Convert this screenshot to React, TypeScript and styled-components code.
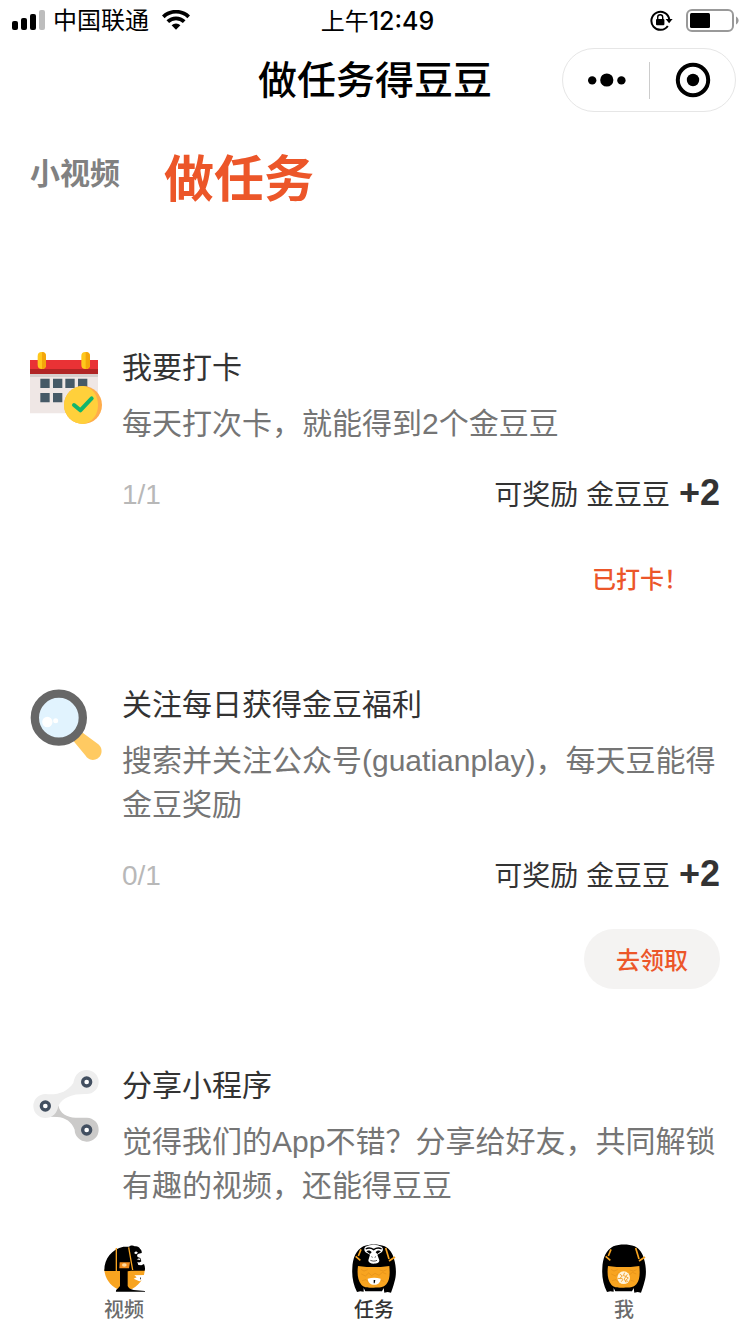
import React from "react";
import styled, { createGlobalStyle } from "styled-components";

const GlobalStyle = createGlobalStyle`
  * { box-sizing: border-box; }
  body {
    margin: 0;
    background: #fff;
    color: #333;
    font-family: "Liberation Sans", "Noto Sans CJK SC", sans-serif;
  }
  button { font-family: inherit; border: 0; padding: 0; background: none; cursor: pointer; }
  a { color: inherit; text-decoration: none; }
  h1, h2, p { margin: 0; font-weight: 400; }
  svg { display: block; flex: none; }
`;

const Screen = styled.div`
  display: flex;
  flex-direction: column;
  height: 100vh;
`;

const StatusBar = styled.div`
  display: grid;
  grid-template-columns: 1fr auto 1fr;
  align-items: center;
  height: 40px;
  padding: 0 11px 0 12px;
  color: #000;
  font-family: Inter, "Noto Sans CJK SC", sans-serif;
  font-size: 24px;
  line-height: 36px;
`;

const StatusGroup = styled.div<{ $end?: boolean }>`
  display: flex;
  align-items: center;
  justify-content: ${(p) => (p.$end ? "flex-end" : "flex-start")};
  gap: ${(p) => (p.$end ? 13 : 8)}px;
`;

const Carrier = styled.span`
  margin-right: 5px;
  padding-top: 2px;
`;

const Clock = styled.time`
  padding: 2px 0 0 4px;
  font-size: 25px;
  font-weight: 500;
`;

const ClockPeriod = styled.span`
  font-size: 24px;
  font-weight: 400;
`;

const NavBar = styled.header`
  display: grid;
  grid-template-columns: 1fr auto 1fr;
  align-items: center;
  height: 80px;
  padding: 0 14px;
  color: #000;
`;

const NavTitle = styled.h1`
  grid-column: 2;
  padding-top: 2px;
  font-size: 39px;
  font-weight: 500;
  line-height: 56px;
`;

const Capsule = styled.div`
  justify-self: end;
  display: flex;
  align-items: center;
  width: 174px;
  height: 64px;
  border: 1px solid #e6e6e6;
  border-radius: 32px;
`;

const CapsuleButton = styled.button`
  display: flex;
  flex: 1;
  align-items: center;
  justify-content: center;
  height: 100%;
  padding: 0 0 0 2px;
`;

const CapsuleDivider = styled.span`
  width: 1px;
  height: 37px;
  background: #ccc;
`;

const Content = styled.main`
  flex: 1;
  min-height: 0;
  overflow-y: auto;
  scrollbar-width: none;
`;

const Channels = styled.nav`
  display: flex;
  gap: 44px;
  padding: 24px 30px 0;
`;

const ChannelLink = styled.a<{ $active?: boolean }>`
  padding-top: ${(p) => (p.$active ? 0 : 8)}px;
  color: ${(p) => (p.$active ? "#ec5629" : "#818181")};
  font-size: ${(p) => (p.$active ? 50 : 30)}px;
  font-weight: 700;
  line-height: ${(p) => (p.$active ? 72 : 44)}px;
`;

const TaskList = styled.section`
  display: flex;
  flex-direction: column;
  gap: 75px;
  padding: 130px 30px 48px;
`;

const Task = styled.article`
  display: flex;
  gap: 20px;
`;

const TaskIcon = styled.div`
  padding-top: 6px;
`;

const TaskBody = styled.div`
  display: flex;
  flex: 1;
  flex-direction: column;
  min-width: 0;
`;

const TaskTitle = styled.h2`
  font-size: 30px;
  line-height: 44px;
`;

const TaskText = styled.p`
  margin-top: 12px;
  margin-right: -4px;
  color: #757575;
  font-size: 30px;
  line-height: 44px;
`;

const TaskMeta = styled.div`
  display: flex;
  align-items: center;
  justify-content: space-between;
  height: 44px;
  margin-top: 26px;
  font-size: 28px;
  line-height: 44px;
`;

const Progress = styled.span`
  padding-top: 2px;
  color: #b8b8b8;
`;

const Reward = styled.span`
  display: flex;
  align-items: baseline;
  gap: 9px;
`;

const Points = styled.strong`
  font-size: 36px;
`;

const TaskAction = styled.button<{ $done?: boolean }>`
  align-self: flex-end;
  height: 60px;
  margin-top: 32px;
  padding: 3px 32px 0;
  border-radius: 30px;
  background: ${(p) => (p.$done ? "transparent" : "#f4f3f2")};
  color: #ec5629;
  font-size: 24px;
  font-weight: 500;
  line-height: 57px;
`;

const TabBar = styled.nav`
  display: grid;
  grid-template-columns: repeat(3, 1fr);
  height: 98px;
  background: #fff;
`;

const Tab = styled.a<{ $active?: boolean }>`
  display: flex;
  flex-direction: column;
  align-items: center;
  gap: 2px;
  padding: 7px 2px 0 0;
  && { color: ${(p) => (p.$active ? "#333" : "#6b6b6b")}; }
  font-size: 20px;
  font-weight: 500;
  line-height: 28px;
`;

const SignalIcon = () => (
  <svg width="33" height="20" viewBox="0 0 33 20" aria-hidden="true">
    <rect x="0" y="11" width="6" height="9" rx="2" />
    <rect x="9" y="8" width="6" height="12" rx="2" />
    <rect x="18" y="4" width="6" height="16" rx="2" />
    <rect x="27" y="0" width="6" height="20" rx="2" fill="#bdbdbd" />
  </svg>
);

const WifiIcon = () => (
  <svg width="28" height="20" viewBox="0 0 28 20" aria-hidden="true">
    <g fill="none" stroke="#000" strokeWidth="3.800">
      <path d="M1.300 6.800a18.400 18.400 0 0 1 25.400 0" />
      <path d="M5.800 11.700a11.900 11.900 0 0 1 16.400 0" />
    </g>
    <path d="M9.600 15.200a6.300 6.300 0 0 1 8.800 0L14 19.800z" />
  </svg>
);

const RotationLockIcon = () => (
  <svg width="23" height="21" viewBox="0 0 23 21" aria-hidden="true">
    <path d="M17.800 16a9 9 0 1 1 1.500-6.500" fill="none" stroke="#000" strokeWidth="2" />
    <path d="M15.600 9h7l-3.500 4.200z" />
    <rect x="6" y="9" width="8.400" height="6.200" rx="1" />
    <path d="M7.700 9.400V7.200a2.500 2.500 0 0 1 5 0v2.200" fill="none" stroke="#000" strokeWidth="1.400" />
  </svg>
);

const BatteryIcon = () => (
  <svg width="53" height="23" viewBox="0 0 53 23" aria-hidden="true">
    <rect x="1" y="1" width="46" height="21" rx="5" fill="none" stroke="#999" strokeWidth="2" />
    <rect x="4" y="4" width="20" height="15" rx="1.500" />
    <path d="M50 7.500c3.400 1.500 3.400 6.500 0 8z" fill="#999" />
  </svg>
);

const MoreIcon = () => (
  <svg width="38" height="14" viewBox="0 0 38 14" aria-hidden="true">
    <circle cx="4.200" cy="7.400" r="4.200" />
    <circle cx="18.800" cy="7" r="6.600" />
    <circle cx="33.400" cy="7.400" r="4.200" />
  </svg>
);

const TargetIcon = () => (
  <svg width="36" height="36" viewBox="0 0 36 36" aria-hidden="true">
    <circle cx="18" cy="18" r="15.200" fill="none" stroke="#000" strokeWidth="4" />
    <circle cx="18" cy="18" r="6.200" />
  </svg>
);

const CalendarIcon = () => (
  <svg width="72" height="72" viewBox="60 66 216 216" aria-hidden="true">
    <path fill="#efe7e5" d="M60 130h204v120H60z" />
    <path fill="#d6cfcd" d="M60 130h204v11H60z" />
    <path fill="#e93235" d="M60 90h204v28H60z" />
    <path fill="#b12525" d="M60 117h204v15H60z" />
    <rect x="83" y="66" width="25" height="51" rx="12" fill="#ffc81c" />
    <path fill="#f4a60b" d="M96 66c7 0 12 5 12 12v27c0 7-5 12-12 12z" />
    <rect x="214" y="66" width="26" height="51" rx="12" fill="#ffc81c" />
    <path fill="#f4a60b" d="M227 66c8 0 13 5 13 12v27c0 7-5 12-13 12z" />
    <path
      fill="#465a67"
      d="M91 146h28v28H91zM129 146h28v28h-28zM166 146h28v28h-28zM204 146h28v28h-28zM91 189h28v28H91zM129 189h28v28h-28z"
    />
    <circle cx="219" cy="225" r="57" fill="#ffac4a" />
    <path fill="#ffd03b" d="M219 168c28 4 45 28 45 57s-17 53-45 57a57 57 0 0 1 0-114z" />
    <path d="M192 225l19 16 34-36" fill="none" stroke="#10b56c" strokeWidth="12" strokeLinecap="round" strokeLinejoin="round" />
  </svg>
);

const SearchIcon = () => (
  <svg width="72" height="72" viewBox="60 57 216 216" aria-hidden="true">
    <path fill="#ffca62" d="M191 214l27-26 47 35c9 7 12 19 8 30-6 16-26 22-39 12-3-2-5-5-7-8z" />
    <circle cx="146.500" cy="143" r="72" fill="#e1f3fe" stroke="#676767" strokeWidth="25" />
    <circle cx="112" cy="156" r="15.500" fill="#fff" />
    <circle cx="137" cy="152" r="7.500" fill="#fff" />
  </svg>
);

const ShareIcon = () => (
  <svg width="72" height="72" viewBox="60 45 216 216" aria-hidden="true">
    <path fill="#cbcac9" d="M145 151c4 25 28 38 54 37h32a36 36 0 1 1-37 36c-8-23-28-37-53-38l-20-1z" />
    <path
      fill="#eee"
      d="M106 117c35 4 66-5 84-33 4-24 18-39 40-39a36 36 0 0 1 0 72c-41-1-70 8-85 35-3 22-18 37-39 37a36 36 0 0 1 0-72z"
    />
    <g fill="#fff" stroke="#424f60" strokeWidth="10">
      <circle cx="106" cy="153" r="12" />
      <circle cx="230" cy="81" r="12" />
      <circle cx="230" cy="225" r="12" />
    </g>
  </svg>
);

const VideoTabIcon = () => (
  <svg width="48" height="51" viewBox="48 27 144 153" aria-hidden="true">
    <path fill="#f8a420" d="M61 106h121c0 10-2 20-7 28-6 12-18 24-31 31h-44c-22-11-38-33-39-59z" />
    <path
      d="M61 111c-1-37 22-65 57-73h17c4-4 12-5 17-1 6-2 14 1 16 7 4 3 6 8 5 13l-9 2c-5 2-6 6-3 10l8 3 3 10c-3 4-8 4-12 2l3 9 9 1 8-4c3 7 4 14 2 20h-40l-11 2v44c2 6 8 10 18 12l34 3v2H96c-1-4 1-7 5-9l7-8v-45z"
    />
    <path d="M97 42v69M134 40l12 68" fill="none" stroke="#f8a420" strokeWidth="4" />
    <path fill="#f28c1d" d="M107 85h31l-3 18h-29z" />
    <ellipse cx="121" cy="93" rx="7" ry="5" fill="#ffd99c" />
    <path fill="#fff" d="M151 124l31-1c-2 11-8 17-16 19l-17-8 9-4zM150 57l6-5 6 4-6 5zM158 76l8-3 3 6z" />
    <path d="M168 130l3 2-2 6z" />
  </svg>
);

const ApeBody = () => (
  <>
    <path d="M88 37c20-7 44-7 64 0 14 7 24 20 28 38 7 22 8 50 1 70-3 12-7 23-10 31l-10-2-10 2-2-14-5 10H94l-5-10v11l-10-1-10 2c-11-22-16-46-14-72 1-28 10-53 33-65z" />
    <path fill="#f8a420" d="M72 96l26 3h42l26-3c2 24 2 41-9 55-8 10-22 10-38 10s-29 0-37-9c-11-13-13-33-10-56z" />
    <path
      d="M82 120l12 6 10-9 9 8 10-7 12 6 10-9 12 5M84 140l12-3 7 8M140 139l11 3M81 106l9 5 11-4M137 108l11 3 10-4"
      fill="none"
      stroke="#d98715"
      strokeWidth="3"
      opacity="0.5"
    />
    <path d="M81 46l-8 20M65 67l14 12M155 42l10 33M165 81l18-12" fill="none" stroke="#f8a420" strokeWidth="5" />
  </>
);

const TaskTabIcon = () => (
  <svg width="48" height="51" viewBox="48 27 144 153" aria-hidden="true">
    <ApeBody />
    <path
      fill="#fff"
      d="M94 38c15-8 35-8 49 0 6 6 5 14-4 19l-9 5 6 17c0 8-8 10-17 10s-16-3-16-10l5-17-9-5c-9-5-10-13-5-19z"
    />
    <path d="M95 45c9-5 17-3 24 2 7-5 15-7 24-2" fill="none" stroke="#000" strokeWidth="4" />
    <path d="M97 52c6-4 13-2 16 3l-5 5zM125 55c3-5 10-7 16-3l-11 8z" />
    <path d="M112 68l4 2M126 68l-4 2M109 79c7 3 14 3 20 0" fill="none" stroke="#000" strokeWidth="2" />
    <path fill="#fff" d="M101 134c13-4 26-4 39 0-1 13-9 18-19 18-12 0-18-6-20-18z" />
    <path d="M119 138h5l-2 10h-3z" />
  </svg>
);

const ProfileTabIcon = () => (
  <svg width="48" height="51" viewBox="48 27 144 153" aria-hidden="true">
    <ApeBody />
    <circle cx="119" cy="131" r="19" fill="#fff4dc" />
    <path
      d="M107 120l8 6-6 5 8 5-5 7M122 116l-4 9 8 2-5 8 5 10M130 121l-4 7 7 4-8 7M101 133l11 1M124 140l8 2"
      fill="none"
      stroke="#f3a536"
      strokeWidth="3"
    />
  </svg>
);

type TaskData = {
  title: string;
  text: string;
  Icon: () => React.JSX.Element;
  status?: { progress: string; points: string; action: string; done: boolean };
};

const tasks: TaskData[] = [
  {
    title: "我要打卡",
    text: "每天打次卡，就能得到2个金豆豆",
    Icon: CalendarIcon,
    status: { progress: "1/1", points: "+2", action: "已打卡！", done: true },
  },
  {
    title: "关注每日获得金豆福利",
    text: "搜索并关注公众号(guatianplay)，每天豆能得金豆奖励",
    Icon: SearchIcon,
    status: { progress: "0/1", points: "+2", action: "去领取", done: false },
  },
  {
    title: "分享小程序",
    text: "觉得我们的App不错？分享给好友，共同解锁有趣的视频，还能得豆豆",
    Icon: ShareIcon,
  },
];

const tabs = [
  { label: "视频", href: "#video", Icon: VideoTabIcon, active: false },
  { label: "任务", href: "#task", Icon: TaskTabIcon, active: true },
  { label: "我", href: "#me", Icon: ProfileTabIcon, active: false },
];

export default function App() {
  return (
    <Screen lang="zh-CN">
      <GlobalStyle />
      <StatusBar>
        <StatusGroup>
          <SignalIcon />
          <Carrier>中国联通</Carrier>
          <WifiIcon />
        </StatusGroup>
        <Clock>
          <ClockPeriod>上午</ClockPeriod>12:49
        </Clock>
        <StatusGroup $end>
          <RotationLockIcon />
          <BatteryIcon />
        </StatusGroup>
      </StatusBar>
      <NavBar>
        <NavTitle>做任务得豆豆</NavTitle>
        <Capsule>
          <CapsuleButton aria-label="更多">
            <MoreIcon />
          </CapsuleButton>
          <CapsuleDivider />
          <CapsuleButton aria-label="关闭">
            <TargetIcon />
          </CapsuleButton>
        </Capsule>
      </NavBar>
      <Content>
        <Channels>
          <ChannelLink href="#videos">小视频</ChannelLink>
          <ChannelLink href="#tasks" $active>
            做任务
          </ChannelLink>
        </Channels>
        <TaskList>
          {tasks.map(({ title, text, Icon, status }) => (
            <Task key={title}>
              <TaskIcon>
                <Icon />
              </TaskIcon>
              <TaskBody>
                <TaskTitle>{title}</TaskTitle>
                <TaskText>{text}</TaskText>
                {status && (
                  <>
                    <TaskMeta>
                      <Progress>{status.progress}</Progress>
                      <Reward>
                        可奖励 金豆豆 <Points>{status.points}</Points>
                      </Reward>
                    </TaskMeta>
                    <TaskAction $done={status.done}>{status.action}</TaskAction>
                  </>
                )}
              </TaskBody>
            </Task>
          ))}
        </TaskList>
      </Content>
      <TabBar>
        {tabs.map(({ label, href, Icon, active }) => (
          <Tab key={label} href={href} $active={active}>
            <Icon />
            {label}
          </Tab>
        ))}
      </TabBar>
    </Screen>
  );
}
